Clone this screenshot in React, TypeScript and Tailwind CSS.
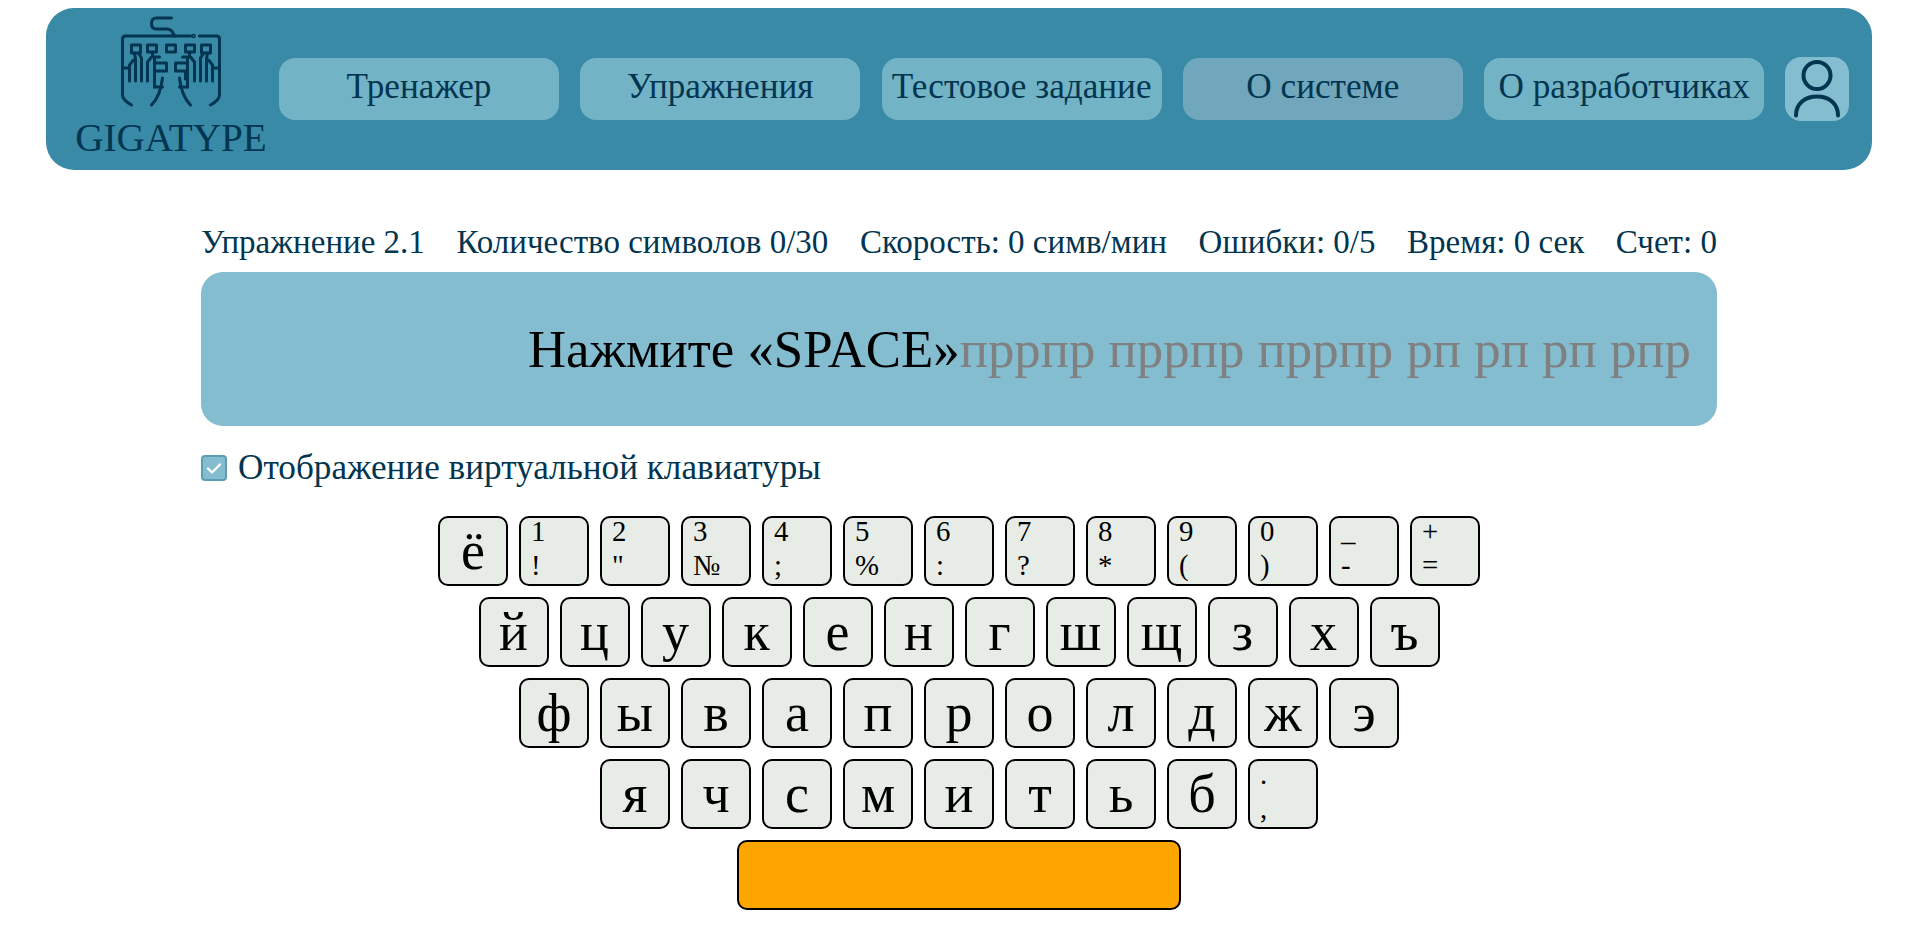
const navItems = [
  { label: "Тренажер", active: false },
  { label: "Упражнения", active: false },
  { label: "Тестовое задание", active: false },
  { label: "О системе", active: true },
  { label: "О разработчиках", active: false },
];

const numberRow: [string, string][] = [
  ["1", "!"], ["2", '"'], ["3", "№"], ["4", ";"], ["5", "%"], ["6", ":"],
  ["7", "?"], ["8", "*"], ["9", "("], ["0", ")"], ["_", "-"], ["+", "="],
];
const row2 = ["й", "ц", "у", "к", "е", "н", "г", "ш", "щ", "з", "х", "ъ"];
const row3 = ["ф", "ы", "в", "а", "п", "р", "о", "л", "д", "ж", "э"];
const row4 = ["я", "ч", "с", "м", "и", "т", "ь", "б"];

function LogoHand() {
  return (
    <g>
      <path d="M13 58v27q0 5 9 10" />
      <path d="M13 58h7" />
      <path d="M20 71V55l4-5" />
      <path d="M26 71V49l-1-6" />
      <path d="M32 71V48l-3-5" />
      <path d="M38 71V52l4-5h1v-5" />
      <path d="M45 77V47h5" />
      <path d="M45 77h8M53 68q-2 18-11 27" />
      <rect x="22" y="35" width="9" height="8" />
      <rect x="38" y="35" width="9" height="7" />
    </g>
  );
}

function Logo() {
  return (
    <svg width="120" height="100" viewBox="1.500 0 120 100" fill="none" stroke="#023550" strokeWidth="3" strokeLinecap="round" strokeLinejoin="round">
      <path d="M62 8H47q-5 0-5 5.500t5 5.500h10q4 0 6 3l2 4h16" />
      <circle cx="84" cy="26" r="0.8" />
      <path d="M65 26H16q-3 0-3 3v29" />
      <path d="M90 26h17q3 0 3 3v29" />
      <LogoHand />
      <g transform="matrix(-1 0 0 1 123 0)">
        <LogoHand />
      </g>
      <rect x="57" y="35" width="9" height="7" />
      <path d="M47 53h10v8H46" />
      <path d="M76 53H66v8h10v8" />
    </svg>
  );
}

function Key({ children }: { children?: React.ReactNode }) {
  return (
    <div className="h-[70px] w-[70px] shrink-0 rounded-[10px] border-2 border-black bg-[#e8ece7] text-black">
      {children}
    </div>
  );
}

function LetterKey({ ch }: { ch: string }) {
  return (
    <Key>
      <div className="flex h-full items-center justify-center text-[54px] leading-none">{ch}</div>
    </Key>
  );
}

function DoubleKey({ top, bottom }: { top: string; bottom: string }) {
  return (
    <Key>
      <div className="-mt-[4px] pl-[10px] text-[28.800px] leading-[34px]">
        <div>{top}</div>
        <div>{bottom}</div>
      </div>
    </Key>
  );
}

export default function App() {
  return (
    <div className="min-h-[925px] bg-white pl-[46px] pr-[41px] pt-[8px] font-['Liberation_Serif','Times_New_Roman',serif] text-[#023550]">
      <header className="flex h-[162px] items-center rounded-[28px] bg-[#388aa6] pl-[23px] pr-[22px]">
        <div className="flex w-[204px] shrink-0 flex-col items-center self-start pt-[1.500px]">
          <div className="h-[100px]"><Logo /></div>
          <div className="mt-[6.500px] text-[39.200px] leading-[44px]">GIGATYPE</div>
        </div>
        <nav className="ml-[6px] flex flex-1 items-center gap-[21.300px]">
          {navItems.map((n) => (
            <div
              key={n.label}
              className={`flex h-[62px] w-[280px] items-center justify-center rounded-[16px] pb-[4px] text-[35.200px] ${n.active ? "bg-[#71a7bc]" : "bg-[#72b3c6]"}`}
            >
              {n.label}
            </div>
          ))}
          <div className="flex h-[64px] w-[64px] shrink-0 items-center justify-center overflow-hidden rounded-[16px] bg-[#83bdcf]">
            <svg width="64" height="64" viewBox="0 0 64 64" fill="none" stroke="#023550" strokeWidth="4" strokeLinecap="round">
              <circle cx="32" cy="18.500" r="13.500" />
              <path d="M11 58.500c0-12 9-19 21-19s21 7 21 19" />
            </svg>
          </div>
        </nav>
      </header>

      <main className="mx-auto mt-[54px] w-[1516px]">
        <div className="flex h-[36px] items-center justify-between text-[33px] leading-[36px]">
          <span>Упражнение 2.1</span>
          <span>Количество символов 0/30</span>
          <span>Скорость: 0 симв/мин</span>
          <span>Ошибки: 0/5</span>
          <span>Время: 0 сек</span>
          <span>Счет: 0</span>
        </div>

        <div className="mt-[12px] flex h-[154px] items-center justify-end overflow-hidden rounded-[22px] bg-[#83bdcf] pr-[26px] pt-[2px] text-[52.800px]">
          <span className="text-black">Нажмите «SPACE»</span>
          <span className="text-[#808080]">пррпр пррпр пррпр рп рп рп рпр</span>
        </div>

        <label className="mt-[24px] flex h-[36px] items-center gap-[11px] text-[35.200px] leading-[36px]">
          <span className="flex h-[26px] w-[26px] items-center justify-center rounded-[4px] border-2 border-[#5c9db3] bg-[#83bdcf]">
            <svg width="18" height="18" viewBox="0 0 18 18" fill="none" stroke="white" strokeWidth="2.400" strokeLinecap="round" strokeLinejoin="round">
              <path d="M3 9.500l4 4 8-8" />
            </svg>
          </span>
          Отображение виртуальной клавиатуры
        </label>
      </main>

      <section className="mt-[30px] flex flex-col items-center gap-[11px]">
        <div className="flex gap-[11px]">
          <LetterKey ch="ё" />
          {numberRow.map(([t, b]) => (
            <DoubleKey key={t} top={t} bottom={b} />
          ))}
        </div>
        <div className="flex gap-[11px]">
          {row2.map((c) => <LetterKey key={c} ch={c} />)}
        </div>
        <div className="flex gap-[11px]">
          {row3.map((c) => <LetterKey key={c} ch={c} />)}
        </div>
        <div className="flex gap-[11px]">
          {row4.map((c) => <LetterKey key={c} ch={c} />)}
          <DoubleKey top="." bottom="," />
        </div>
        <div className="h-[70px] w-[444px] rounded-[10px] border-2 border-black bg-[#ffa500]" />
      </section>
    </div>
  );
}
